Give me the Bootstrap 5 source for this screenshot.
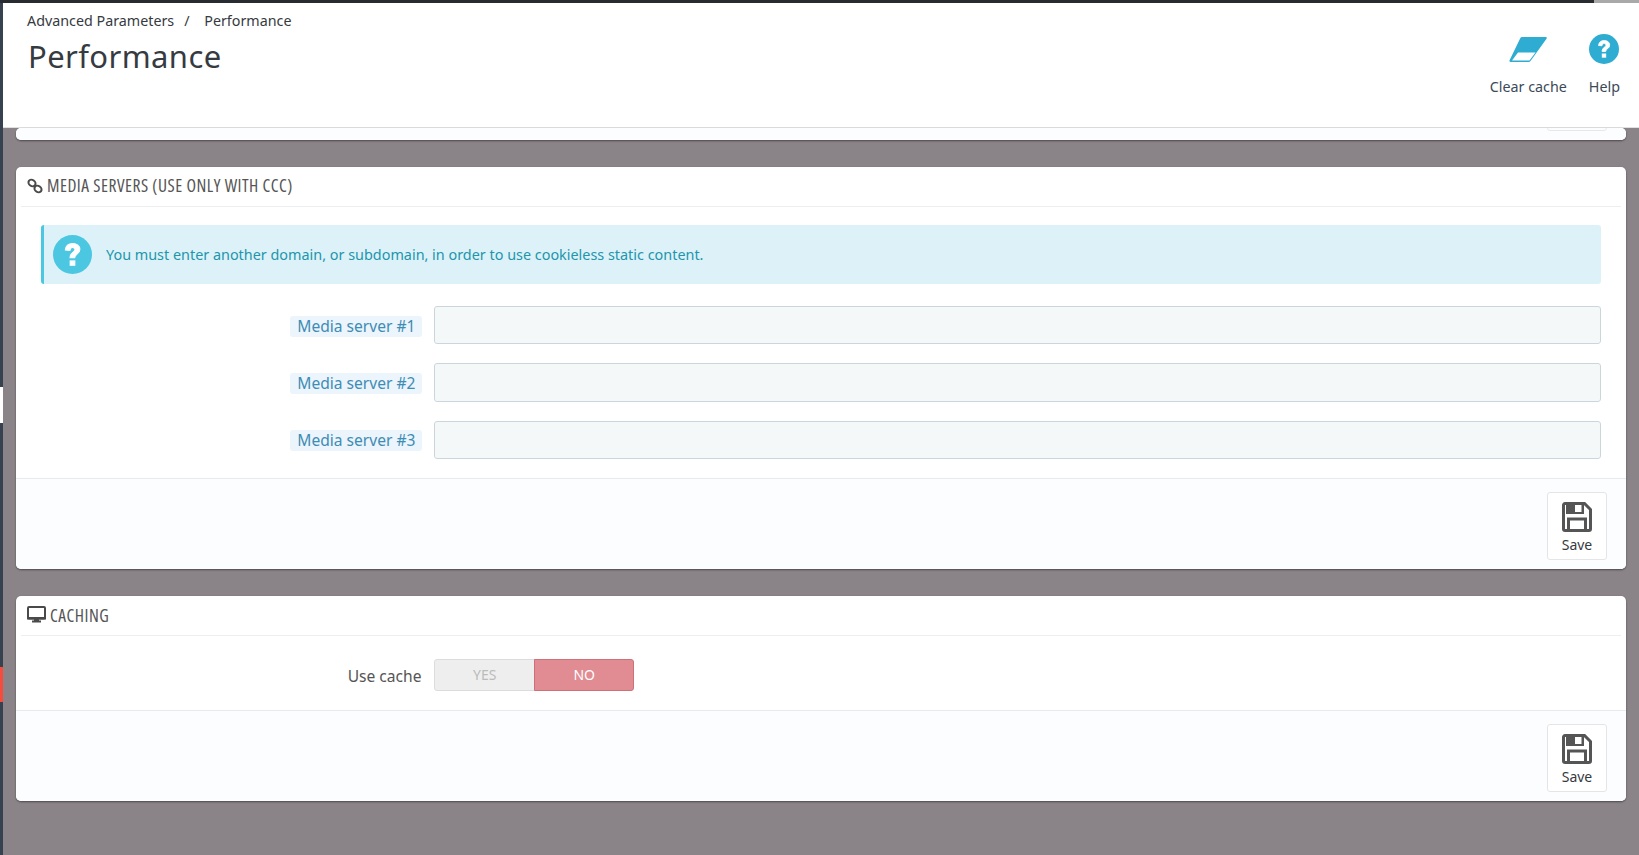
<!DOCTYPE html>
<html lang="en">
<head>
  <meta charset="UTF-8" />
  <meta name="viewport" content="width=device-width, initial-scale=1" />
  <title>Performance</title>
  <link href="https://cdn.jsdelivr.net/npm/bootstrap@5.3.3/dist/css/bootstrap.min.css" rel="stylesheet">
  <style>
    html, body { height: 100%; }
    body {
      font-family: "Noto Sans", sans-serif;
      background-color: #8a8387;
      color: #363a41;
      overflow: hidden;
    }

    /* top strip and left strip belong to the admin menu behind the page */
    .top-strip { height: 3px; flex: none; background-color: #282b30; }
    .top-strip-end { width: 45px; background-color: #a9a9a9; }
    .side-strip { width: 3px; flex: none; background-color: #36424f; }
    .side-white { height: 36px; margin-top: 384px; background-color: #fff; }
    .side-red { height: 35px; margin-top: 244px; background-color: #f54c3e; }

    .page-head {
      height: 125px;
      background-color: #fff;
      border-bottom: 1px solid #dfe0e1;
      padding: 9px 19px 0 24px;
    }
    .crumbs { font-size: 14.3px; line-height: 17px; color: #363a41; }
    .crumbs span { margin: 0 11px 0 10px; }
    .page-title { font-size: 31px; line-height: 40px; font-weight: 400; margin: 7px 0 0 1px; letter-spacing: .4px; }
    .tool-link { font-size: 14.3px; color: #3c4a58; text-align: center; text-decoration: none; }
    .tool-link svg { display: block; margin: 0 auto 12px; }
    .head-tools { gap: 22px; padding-top: 22px; }

    .page-body { padding: 0 13px; }
    .panel-box {
      border: 0;
      border-radius: 5px;
      box-shadow: 0 1px 2px rgba(0, 0, 0, .45);
      margin-bottom: 27px;
      background-color: #fff;
      overflow: hidden;
    }
    .panel-stub { height: 12px; background-color: #fcfdfe; position: relative; }
    .stub-btn {
      position: absolute;
      right: 19px;
      top: -6px;
      width: 60px;
      height: 9px;
      border: 1px solid #e6e8ea;
      border-radius: 3px;
    }
    .panel-head {
      height: 40px;
      margin: 0 5px;
      padding: 0 0 2px 6px;
      border-bottom: 1px solid #eceef0;
      font-family: "Open Sans", sans-serif;
      font-stretch: 75%;
      font-size: 17.5px;
      letter-spacing: .5px;
      color: #555;
      gap: 4px;
    }
    .panel-main { padding: 18px 25px 19px; }
    .tip-box {
      height: 59px;
      margin: 0 0 22px;
      padding: 0 0 0 9px;
      gap: 14px;
      border: 0;
      border-left: 3px solid #4bc7e2;
      border-radius: 3px;
      background-color: #dcf2f8;
      color: #2295ad;
      font-size: 14.4px;
    }
    .field-row {
      display: grid;
      grid-template-columns: 380.5px 1fr;
      column-gap: 12.5px;
      align-items: center;
      margin-bottom: 19px;
    }
    .field-row:last-child { margin-bottom: 0; }
    .field-label { justify-self: end; margin: 2px 0 0; font-size: 15.6px; line-height: 21px; color: #3f8cb5; background-color: #ebf5fb; border-radius: 3px; padding: 0 6px 0 7px; }
    .field-plain { color: #555; background: none; padding: 0; }
    .field-input { height: 38.4px; background-color: #f5f8f9; border: 1px solid #cbd6dc; border-radius: 3px; }
    .panel-foot {
      background-color: #fcfdfe;
      border-top: 1px solid #e8ebed;
      padding: 13px 19px 9px;
    }
    .save-btn {
      width: 60px;
      height: 68px;
      padding: 9px 0 5px;
      background-color: #fff;
      border: 1px solid #e3e5e7;
      border-radius: 3px;
      color: #363a41;
      font-size: 14px;
      line-height: 18px;
    }
    .save-btn svg { display: block; margin: 0 auto 4px; }
    .use-row { padding: 23px 25px 19px; }
    .use-cache { width: 200px; height: 32px; }
    .use-cache .btn { font-size: 14px; padding: 0; border-radius: 3px; line-height: 30px; }
    .yes-btn { background-color: #eee; border-color: #dcdcdc; color: #bbb; }
    .no-btn { background-color: #e08c92; border-color: #cf6f77; color: #fff; }
  </style>
</head>
<body class="d-flex flex-column">

<div class="top-strip d-flex justify-content-end"><div class="top-strip-end"></div></div>

<div class="d-flex flex-grow-1">
  <!-- Left menu strip -->
  <div class="side-strip">
    <div class="side-white"></div>
    <div class="side-red"></div>
  </div>

  <div class="flex-grow-1">
    <!-- Page header -->
    <div class="page-head d-flex justify-content-between">
      <div>
        <div class="crumbs">Advanced Parameters<span>/</span> Performance</div>
        <h1 class="page-title">Performance</h1>
      </div>
      <div class="head-tools d-flex">
        <a class="tool-link" href="#">
          <svg width="38" height="30" viewBox="0 0 38 30"><path d="M13 3h23.500q2 0 1 1.800L21.500 27q-.8.9-2 .9H2q-2.300 0-1.300-1.900L11.500 3.800q.6-.8 1.500-.8z" fill="#2eacd2"/><path d="M3 26.500 9 18.500h17.500L20.500 26.500z" fill="#fff"/></svg>
          Clear cache
        </a>
        <a class="tool-link" href="#">
          <svg width="30" height="30" viewBox="0 0 30 30"><circle cx="15" cy="15" r="15" fill="#2eacd2"/><path d="M9.500 11.500c.3-3.300 2.600-5 5.700-5 3.200 0 5.500 1.800 5.500 4.500 0 3.800-4 3.600-4 6.500h-3.600c0-4.300 3.800-4.200 3.800-6.300 0-1-.7-1.600-1.800-1.600-1.200 0-1.900.8-2.100 2.200z" fill="#fff" stroke="#fff" stroke-width=".8"/><rect x="12.800" y="19.500" width="4.400" height="4.200" fill="#fff"/></svg>
          Help
        </a>
      </div>
    </div>

    <div class="page-body">
      <!-- Bottom of the panel above -->
      <div class="card panel-box"><div class="panel-stub"><div class="stub-btn"></div></div></div>

      <!-- Media servers -->
      <div class="card panel-box">
        <div class="panel-head d-flex align-items-center">
          <svg width="16" height="16" viewBox="0 0 16 16" fill="none" stroke="#4a4a4a" stroke-width="2"><ellipse cx="5" cy="5" rx="3.800" ry="3" transform="rotate(35 5 5)"/><ellipse cx="11" cy="11" rx="3.800" ry="3" transform="rotate(35 11 11)"/></svg>
          <span>MEDIA SERVERS (USE ONLY WITH CCC)</span>
        </div>
        <div class="panel-main">
          <div class="alert tip-box d-flex align-items-center">
            <svg width="39" height="39" viewBox="0 0 30 30" class="flex-shrink-0"><circle cx="15" cy="15" r="15" fill="#4bc7e2"/><path d="M9.500 11.500c.3-3.300 2.600-5 5.700-5 3.200 0 5.500 1.800 5.500 4.500 0 3.800-4 3.600-4 6.500h-3.600c0-4.300 3.800-4.200 3.800-6.300 0-1-.7-1.600-1.800-1.600-1.200 0-1.900.8-2.100 2.200z" fill="#fff" stroke="#fff" stroke-width=".8"/><rect x="12.800" y="19.500" width="4.400" height="4.200" fill="#fff"/></svg>
            You must enter another domain, or subdomain, in order to use cookieless static content.
          </div>
          <div class="field-row">
            <label class="field-label">Media server #1</label>
            <input class="form-control field-input" type="text">
          </div>
          <div class="field-row">
            <label class="field-label">Media server #2</label>
            <input class="form-control field-input" type="text">
          </div>
          <div class="field-row">
            <label class="field-label">Media server #3</label>
            <input class="form-control field-input" type="text">
          </div>
        </div>
        <div class="panel-foot d-flex justify-content-end">
          <button class="btn save-btn" type="button">
            <svg width="30" height="30" viewBox="0 0 30 30"><path d="M3 1.500h19.500l6 6V27a1.500 1.500 0 0 1-1.500 1.500H3A1.500 1.500 0 0 1 1.500 27V3A1.500 1.500 0 0 1 3 1.500z" fill="none" stroke="#555" stroke-width="3"/><path d="M4 2h18v10H4z" fill="#555"/><rect x="13" y="3" width="6.500" height="7" fill="#fff"/><path d="M6.500 28V17h17v11" fill="none" stroke="#555" stroke-width="3"/></svg>
            Save
          </button>
        </div>
      </div>

      <!-- Caching -->
      <div class="card panel-box">
        <div class="panel-head d-flex align-items-center">
          <svg width="19" height="17" viewBox="0 0 19 17"><rect x="1" y="1" width="17" height="11.500" rx="1" fill="#fff" stroke="#4a4a4a" stroke-width="2"/><path d="M0 11h19v2.500H0zM7 13h5v1.500h2V16.500H5v-2h2z" fill="#4a4a4a"/></svg>
          <span>CACHING</span>
        </div>
        <div class="use-row field-row mb-0">
          <label class="field-label field-plain">Use cache</label>
          <div class="btn-group use-cache">
            <button class="btn yes-btn" type="button">YES</button>
            <button class="btn no-btn" type="button">NO</button>
          </div>
        </div>
        <div class="panel-foot d-flex justify-content-end">
          <button class="btn save-btn" type="button">
            <svg width="30" height="30" viewBox="0 0 30 30"><path d="M3 1.500h19.500l6 6V27a1.500 1.500 0 0 1-1.500 1.500H3A1.500 1.500 0 0 1 1.500 27V3A1.500 1.500 0 0 1 3 1.500z" fill="none" stroke="#555" stroke-width="3"/><path d="M4 2h18v10H4z" fill="#555"/><rect x="13" y="3" width="6.500" height="7" fill="#fff"/><path d="M6.500 28V17h17v11" fill="none" stroke="#555" stroke-width="3"/></svg>
            Save
          </button>
        </div>
      </div>
    </div>
  </div>
</div>

<script src="https://cdn.jsdelivr.net/npm/bootstrap@5.3.3/dist/js/bootstrap.bundle.min.js"></script>
</body>
</html>
